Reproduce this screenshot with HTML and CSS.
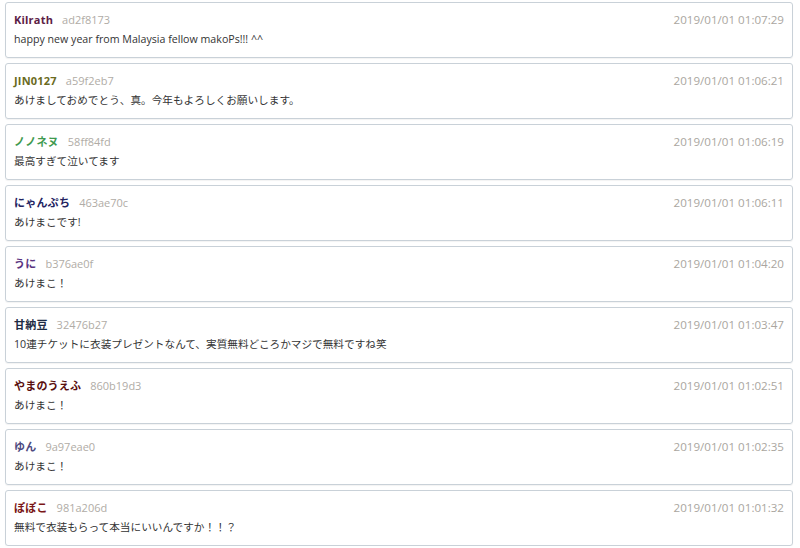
FILE: index.html
```html
<!DOCTYPE html>
<html lang="ja">
<head>
    <meta charset="UTF-8">
    <meta name="viewport" content="width=device-width, initial-scale=1.0">
    <title>Comments</title>
    <link rel="stylesheet" href="styles.css">
</head>
<body>
    <div class="comments">
        <div class="comment">
            <div class="comment-head">
                <span class="name c1">Kilrath</span>
                <span class="hash">ad2f8173</span>
                <span class="time">2019/01/01 01:07:29</span>
            </div>
            <div class="body">happy new year from Malaysia fellow makoPs!!! ^^</div>
        </div>
        <div class="comment">
            <div class="comment-head">
                <span class="name c2">JIN0127</span>
                <span class="hash">a59f2eb7</span>
                <span class="time">2019/01/01 01:06:21</span>
            </div>
            <div class="body">あけましておめでとう、真。今年もよろしくお願いします。</div>
        </div>
        <div class="comment">
            <div class="comment-head">
                <span class="name c3">ノノネヌ</span>
                <span class="hash">58ff84fd</span>
                <span class="time">2019/01/01 01:06:19</span>
            </div>
            <div class="body">最高すぎて泣いてます</div>
        </div>
        <div class="comment">
            <div class="comment-head">
                <span class="name c4">にゃんぷち</span>
                <span class="hash">463ae70c</span>
                <span class="time">2019/01/01 01:06:11</span>
            </div>
            <div class="body">あけまこです!</div>
        </div>
        <div class="comment">
            <div class="comment-head">
                <span class="name c5">うに</span>
                <span class="hash">b376ae0f</span>
                <span class="time">2019/01/01 01:04:20</span>
            </div>
            <div class="body">あけまこ！</div>
        </div>
        <div class="comment">
            <div class="comment-head">
                <span class="name c6">甘納豆</span>
                <span class="hash">32476b27</span>
                <span class="time">2019/01/01 01:03:47</span>
            </div>
            <div class="body">10連チケットに衣装プレゼントなんて、実質無料どころかマジで無料ですね笑</div>
        </div>
        <div class="comment">
            <div class="comment-head">
                <span class="name c7">やまのうえふ</span>
                <span class="hash">860b19d3</span>
                <span class="time">2019/01/01 01:02:51</span>
            </div>
            <div class="body">あけまこ！</div>
        </div>
        <div class="comment">
            <div class="comment-head">
                <span class="name c8">ゆん</span>
                <span class="hash">9a97eae0</span>
                <span class="time">2019/01/01 01:02:35</span>
            </div>
            <div class="body">あけまこ！</div>
        </div>
        <div class="comment">
            <div class="comment-head">
                <span class="name c9">ぽぽこ</span>
                <span class="hash">981a206d</span>
                <span class="time">2019/01/01 01:01:32</span>
            </div>
            <div class="body">無料で衣装もらって本当にいいんですか！！？</div>
        </div>
    </div>
</body>
</html>
```

FILE: styles.css
```css
body {
    margin: 0;
    padding: 2px 7px 0 5px;
    background: #fff;
    font-family: "Open Sans", "Noto Sans CJK JP", sans-serif;
    font-size: 11px;
    color: #333;
}

.comments {
    display: flex;
    flex-direction: column;
    gap: 5px;
}

.comment {
    border: 1px solid #c9d1d8;
    border-radius: 3px;
    padding: 7px 8px 9px 8px;
    box-shadow: 0 1px 1px rgba(0, 0, 0, 0.05);
}

.comment-head {
    display: flex;
    align-items: center;
    height: 18px;
    margin-bottom: 2px;
}

.name {
    font-weight: bold;
    margin-right: 9px;
    letter-spacing: 0.2px;
}

.hash {
    color: #b0aca6;
}

.time {
    margin-left: auto;
    color: #aaa6a0;
    font-size: 11.6px;
}

.body {
    height: 18px;
    line-height: 18px;
    font-size: 10.65px;
}

.c1 { color: #5c2146; }
.c2 { color: #6b6b1e; }
.c3 { color: #3f9a4f; }
.c4 { color: #23235f; }
.c5 { color: #5a3380; }
.c6 { color: #1e2b44; }
.c7 { color: #5a0f0f; }
.c8 { color: #4d4a80; }
.c9 { color: #7a1616; }
```
